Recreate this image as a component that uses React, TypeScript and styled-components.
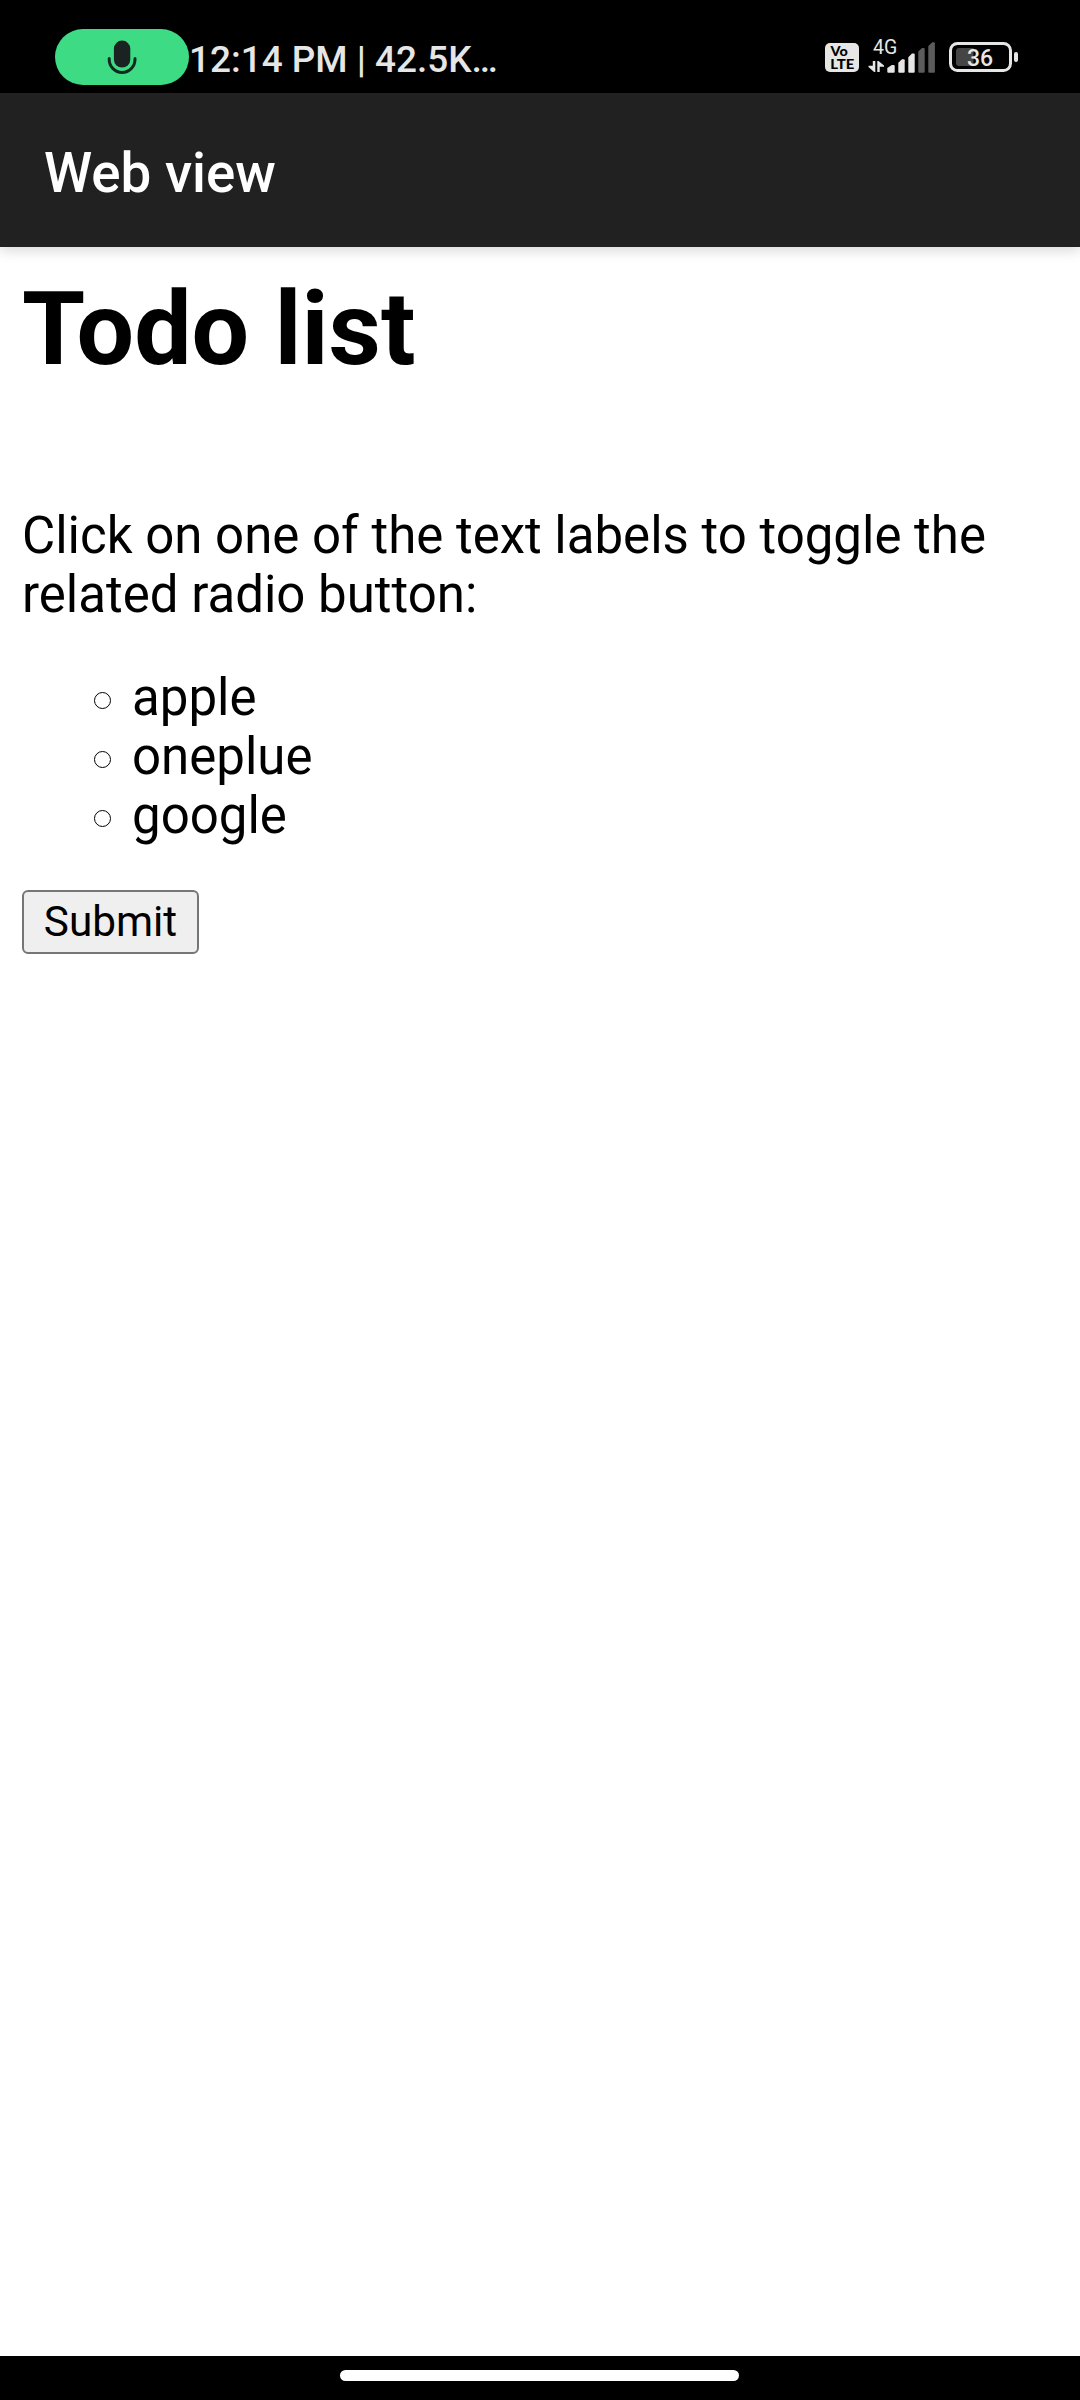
import React from "react";
import styled, { createGlobalStyle } from "styled-components";

const GlobalStyle = createGlobalStyle`
  body {
    margin: 0;
    background: #fff;
    font-family: Roboto, "Noto Sans", sans-serif;
  }
`;

const Screen = styled.div`
  display: flex;
  flex-direction: column;
  width: 1080px;
  height: 2400px;
  overflow: hidden;
  background: #fff;
`;

const StatusBar = styled.header`
  display: flex;
  flex: none;
  align-items: flex-start;
  justify-content: space-between;
  height: 93px;
  padding: 0 62px 0 55px;
  box-sizing: border-box;
  background: #000;
`;

const StatusStart = styled.div`
  display: flex;
  align-items: flex-start;
`;

const MicPill = styled.div`
  display: flex;
  align-items: center;
  justify-content: center;
  width: 134px;
  height: 56px;
  margin-top: 29px;
  border-radius: 28px;
  background: #3ddc84;
`;

const Clock = styled.span`
  margin-top: 38px;
  color: #e6e6e6;
  font-size: 36.9px;
  font-weight: 500;
  line-height: 44px;
  white-space: nowrap;
`;

const StatusIcons = styled.div`
  display: flex;
  align-items: flex-start;
`;

const AppBar = styled.div`
  display: flex;
  flex: none;
  align-items: center;
  height: 154px;
  padding: 5px 44px 0;
  box-sizing: border-box;
  background: #212121;
  box-shadow: 0 4px 12px rgba(0, 0, 0, 0.15);
`;

const AppTitle = styled.div`
  color: #fff;
  font-size: 54.7px;
  font-weight: 500;
  line-height: 64px;
`;

const Page = styled.main`
  flex: 1;
  padding: 23px 22px 0;
  color: #000;
  font-size: 51px;
  line-height: 59px;
`;

const Heading = styled.h1`
  margin: 0 0 117px;
  font-size: 102px;
  font-weight: 700;
  line-height: 119px;
`;

const Prompt = styled.p`
  margin: 0 0 44px;
`;

const Options = styled.ul`
  display: flex;
  flex-direction: column;
  margin: 0 0 45px;
  padding: 0 0 0 72px;
  list-style: none;
`;

const Option = styled.li`
  display: flex;
  align-items: center;
  gap: 21px;
`;

const Bullet = styled.span`
  width: 17px;
  height: 17px;
  margin-top: 5px;
  box-sizing: border-box;
  border: 1px solid #000;
  border-radius: 50%;
`;

const SubmitButton = styled.button`
  display: block;
  width: 177px;
  height: 64px;
  padding: 0;
  border: 2px solid #767676;
  border-radius: 6px;
  background: #efefef;
  color: #000;
  font-family: inherit;
  font-size: 42.3px;
  line-height: 50px;
`;

const NavBar = styled.footer`
  display: flex;
  flex: none;
  height: 44px;
  padding: 14px 0 0 340px;
  box-sizing: border-box;
  background: #000;
`;

const HomeHandle = styled.div`
  width: 399px;
  height: 11px;
  border-radius: 6px;
  background: #fff;
`;

const MicIcon = () => (
  <svg width="30" height="34" viewBox="0 0 30 34">
    <rect x="6.9" y="0.6" width="16.4" height="27" rx="8.2" fill="#1b2322" />
    <path d="M2.2 18.5v1a12.9 12.9 0 0 0 25.8 0v-1" fill="none" stroke="#0f2a1e" strokeWidth="3" strokeLinecap="round" />
  </svg>
);

const ConnectivityIcons = () => (
  <svg width="198" height="93" viewBox="820 0 198 93" fontFamily="Roboto, sans-serif">
    <rect x="825" y="43" width="34" height="29" rx="5" fill="#e6e6e6" />
    <g fontFamily="Lato, sans-serif" fontWeight="900" fontSize="12.6" fill="#000">
      <text x="830.6" y="55.8" textLength="17.2" lengthAdjust="spacingAndGlyphs">Vo</text>
      <text x="830.3" y="68.6" textLength="24" lengthAdjust="spacingAndGlyphs">LTE</text>
    </g>
    <text x="873" y="53.8" fontSize="19.5" fill="#e6e6e6">4G</text>
    <g fill="#e6e6e6">
      <path d="M872.8 61h2.5v11h-1.2l-5.6-5v-1.2h4.3z" />
      <path d="M877.3 61h1.2l5.5 4.6v1.2h-4.3v5.2h-2.4z" />
      <path d="M887.3 68l4.5-3h1.9q1 0 1 1v5.7q0 1-1 1h-5.4q-1 0-1-1z" />
      <path d="M898.3 62.7l3.7-3.4h1.7q1 0 1 1v11.4q0 1-1 1h-4.4q-1 0-1-1z" />
      <path d="M908.3 57.2l3.7-3.7h1.7q1 0 1 1v17.2q0 1-1 1h-4.4q-1 0-1-1z" />
    </g>
    <g fill="#5c5c5c">
      <path d="M918.3 51.5l3.7-3.5h1.7q1 0 1 1v22.7q0 1-1 1h-4.4q-1 0-1-1z" />
      <path d="M928.3 46l4-3.7h1.6q1 0 1 1v28.4q0 1-1 1h-4.6q-1 0-1-1z" />
    </g>
    <rect x="950.5" y="43.5" width="60" height="27" rx="7" fill="none" stroke="#e6e6e6" strokeWidth="3" />
    <path d="M973.5 48v18H959q-3 0-3-3V51q0-3 3-3z" fill="#454545" />
    <rect x="1014" y="52" width="4" height="10" rx="2" fill="#e6e6e6" />
    <text x="967" y="66" fontSize="23" fontWeight="500" fill="#e6e6e6">36</text>
  </svg>
);

const brands = ["apple", "oneplue", "google"];

export default function App() {
  return (
    <>
      <GlobalStyle />
      <Screen>
        <StatusBar>
          <StatusStart>
            <MicPill>
              <MicIcon />
            </MicPill>
            <Clock>12:14 PM | 42.5K…</Clock>
          </StatusStart>
          <StatusIcons>
            <ConnectivityIcons />
          </StatusIcons>
        </StatusBar>
        <AppBar>
          <AppTitle>Web view</AppTitle>
        </AppBar>
        <Page>
          <Heading>Todo list</Heading>
          <Prompt>
            Click on one of the text labels to toggle the related radio button:
          </Prompt>
          <Options>
            {brands.map((brand) => (
              <Option key={brand}>
                <Bullet />
                {brand}
              </Option>
            ))}
          </Options>
          <SubmitButton type="button">Submit</SubmitButton>
        </Page>
        <NavBar>
          <HomeHandle />
        </NavBar>
      </Screen>
    </>
  );
}
